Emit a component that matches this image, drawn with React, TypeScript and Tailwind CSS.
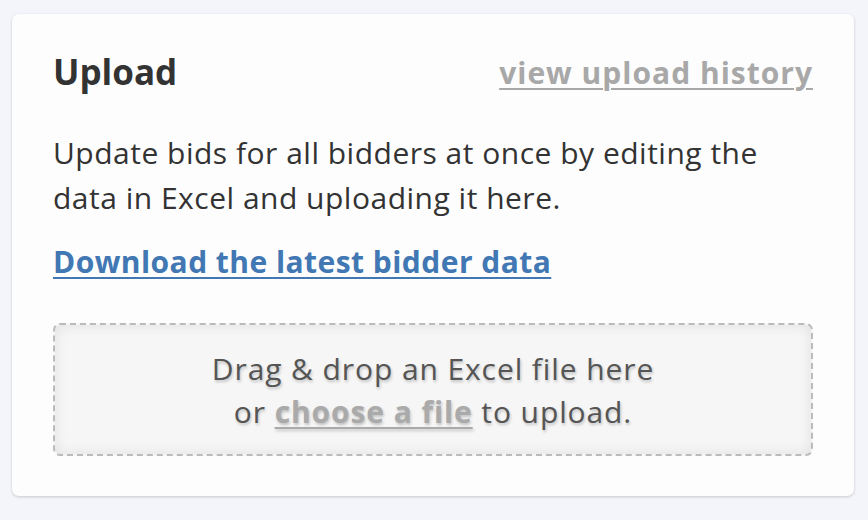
export default function App() {
  return (
    <div
      className="min-h-[520px] w-[868px] bg-[#f4f5fa] pl-[12px] pt-[14px]"
      style={{ fontFamily: '"Open Sans", sans-serif' }}
    >
      {/* Upload card */}
      <div className="w-[842px] h-[482px] rounded-[7px] bg-[#fdfdfd] px-[41px] pt-[37px] shadow-[0_1px_3px_rgba(0,0,0,0.18)]">
        <div className="flex items-baseline justify-between leading-[1.2]">
          <h2 className="text-[35px] font-bold text-[#333]">Upload</h2>
          <a className="relative top-[-1px] text-[30px] font-bold tracking-[1px] text-[#a8a8a8] underline underline-offset-[4px] decoration-[2px]">
            view upload history
          </a>
        </div>

        <p className="mt-[38px] text-[30px] leading-[44.5px] tracking-[0.5px] text-[#333]">
          Update bids for all bidders at once by editing the data in Excel and uploading it here.
        </p>

        <a className="mt-[19px] block text-[30px] font-bold leading-[45px] tracking-[0.45px] text-[#4177b3] underline underline-offset-[4px] decoration-[2px]">
          Download the latest bidder data
        </a>

        {/* Drop zone */}
        <div className="mt-[39px] h-[133px] rounded-[7px] border-2 border-dashed border-[#bbbbbb] bg-[#f6f6f6] pt-[23px] text-center text-[30px] leading-[42.5px] tracking-[0.9px] text-[#555] shadow-[inset_0_0_14px_rgba(0,0,0,0.09)] [text-shadow:1px_2px_3px_rgba(0,0,0,0.22)]">
          <div>Drag &amp; drop an Excel file here</div>
          <div>
            or{" "}
            <a className="font-bold text-[#aaaaaa] underline underline-offset-[4px] decoration-[2px]">
              choose a file
            </a>{" "}
            to upload.
          </div>
        </div>
      </div>
    </div>
  );
}
